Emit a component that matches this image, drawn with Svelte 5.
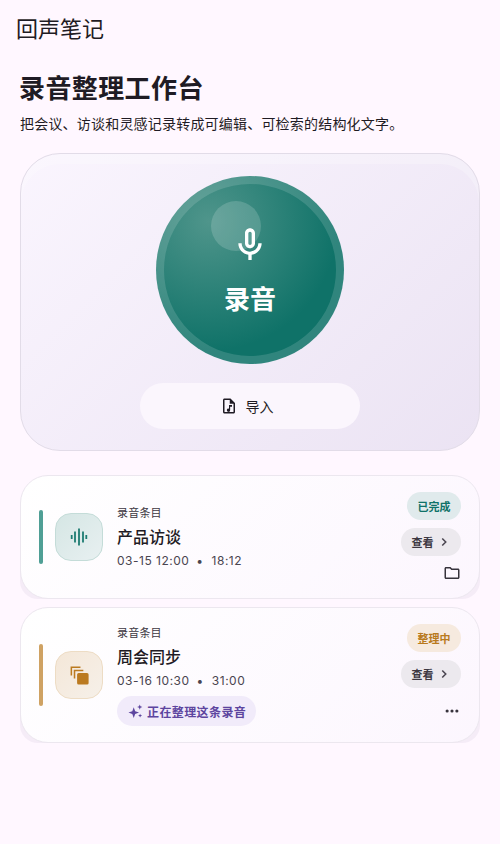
<script lang="ts">
  interface Recording {
    name: string;
    time: string;
    length: string;
    status: string;
    kind: "done" | "busy";
    note?: string;
  }

  const recordings: Recording[] = [
    { name: "产品访谈", time: "03-15 12:00", length: "18:12", status: "已完成", kind: "done" },
    { name: "周会同步", time: "03-16 10:30", length: "31:00", status: "整理中", kind: "busy", note: "正在整理这条录音" },
  ];
</script>

<div class="page">
  <header class="topbar">回声笔记</header>

  <section class="intro">
    <h1>录音整理工作台</h1>
    <p>把会议、访谈和灵感记录转成可编辑、可检索的结构化文字。</p>
  </section>

  <section class="hero">
    <button class="record">
      <span class="gloss"></span>
      <svg class="mic" viewBox="0 0 24 24" width="40" height="40" aria-hidden="true">
        <path fill="#fff" d="M12 14c1.66 0 3-1.34 3-3V5c0-1.66-1.34-3-3-3S9 3.34 9 5v6c0 1.66 1.34 3 3 3zm-1-9c0-.55.45-1 1-1s1 .45 1 1v6c0 .55-.45 1-1 1s-1-.45-1-1V5z" />
        <path fill="#fff" d="M17 11c0 2.76-2.24 5-5 5s-5-2.24-5-5H5c0 3.53 2.61 6.43 6 6.92V21h2v-3.08c3.39-.49 6-3.39 6-6.92h-2z" />
      </svg>
      <span class="record-label">录音</span>
    </button>
    <button class="import">
      <svg viewBox="0 0 24 24" width="18" height="18" aria-hidden="true">
        <path fill="#1f1b24" d="M14 2H6c-1.1 0-2 .9-2 2v16c0 1.1.9 2 2 2h12c1.1 0 2-.9 2-2V8l-6-6zM6 20V4h7v5h5v11H6z" />
        <path fill="#1f1b24" d="M12 10.5v5.05a2.2 2.2 0 1 0 1.5 2.08V13h2.5v-2.5h-4z" />
      </svg>
      <span>导入</span>
    </button>
  </section>

  <section class="list">
    {#each recordings as item}
      <article class="card {item.kind}">
        <span class="accent"></span>
        <span class="thumb">
          {#if item.kind === "done"}
            <svg viewBox="0 0 24 24" width="24" height="24" aria-hidden="true">
              <path fill="none" stroke="#1d7c72" stroke-width="1.8" d="M12 3.500v17M8 6.500v11M16 6.500v11M4.700 10v4M19.300 10v4" />
            </svg>
          {:else}
            <svg viewBox="0 0 24 24" width="23" height="23" aria-hidden="true">
              <path fill="none" stroke="#bb7a20" stroke-width="1.6" d="M3.500 12V3.500H13M6.800 15V6.800H16" />
              <rect x="9.500" y="9.500" width="12" height="12" rx="1.600" fill="#bb7a20" />
            </svg>
          {/if}
        </span>
        <div class="body">
          <span class="eyebrow">录音条目</span>
          <h2>{item.name}</h2>
          <span class="meta">{item.time}<i>•</i>{item.length}</span>
          {#if item.note}
            <span class="note">
              <svg viewBox="0 0 24 24" width="17" height="17" aria-hidden="true">
                <path fill="#5d459f" d="M9.500 6l2 5.500 5.500 2-5.500 2-2 5.500-2-5.500-5.500-2 5.500-2zM18 2l1 2.700 2.700 1-2.700 1-1 2.700-1-2.700-2.700-1 2.700-1zM18.500 15l.8 2 2 .8-2 .8-.8 2-.8-2-2-.8 2-.8z" />
              </svg>
              {item.note}
            </span>
          {/if}
        </div>
        <div class="side">
          <span class="badge">{item.status}</span>
          <button class="view">
            查看
            <svg viewBox="0 0 24 24" width="14" height="14" aria-hidden="true">
              <path fill="none" stroke="#4a4550" stroke-width="2.600" d="M9 6l6 6-6 6" />
            </svg>
          </button>
          {#if item.kind === "done"}
            <svg class="tail" viewBox="0 0 24 24" width="18" height="18" aria-hidden="true">
              <path fill="#37333c" d="M20 6h-8l-2-2H4c-1.100 0-2 .9-2 2v12c0 1.100.9 2 2 2h16c1.100 0 2-.9 2-2V8c0-1.100-.9-2-2-2zm0 12H4V6h5.170l2 2H20v10z" />
            </svg>
          {:else}
            <svg class="tail dots" viewBox="0 0 24 24" width="18" height="18" aria-hidden="true">
              <circle cx="5.500" cy="12" r="2.100" fill="#37333c" />
              <circle cx="12" cy="12" r="2.100" fill="#37333c" />
              <circle cx="18.500" cy="12" r="2.100" fill="#37333c" />
            </svg>
          {/if}
        </div>
      </article>
    {/each}
  </section>
</div>

<style>
  :global(body) {
    margin: 0;
    background: #fff7ff;
  }

  .page {
    min-height: 844px;
    box-sizing: border-box;
    background: #fff7ff;
    color: #1f1b24;
    font-family: "Noto Sans CJK SC", "Noto Sans", sans-serif;
  }

  button {
    border: none;
    font-family: inherit;
    cursor: pointer;
    padding: 0;
  }

  .topbar {
    height: 54px;
    padding-left: 16px;
    display: flex;
    align-items: center;
    font-size: 22px;
    line-height: 28px;
  }

  .intro {
    padding: 13px 20px 0;
  }

  h1 {
    margin: 0 0 0 -1px;
    font-size: 26px;
    line-height: 40px;
    font-weight: 700;
    letter-spacing: 0.4px;
  }

  .intro p {
    margin: 6px 0 0;
    font-size: 14px;
    line-height: 20px;
    letter-spacing: 0.2px;
  }

  .hero {
    margin: 20px 20px 0;
    height: 298px;
    box-sizing: border-box;
    border: 1px solid #e2dce8;
    border-radius: 40px;
    background: linear-gradient(135deg, #faf5fe, #ebe3f3);
    box-shadow: inset 0 10px 0 rgba(255, 255, 255, 0.24);
    padding-top: 22px;
    display: flex;
    flex-direction: column;
    align-items: center;
  }

  .record {
    position: relative;
    width: 188px;
    height: 188px;
    flex: none;
    border-radius: 50%;
    border: 8px solid rgba(255, 255, 255, 0.14);
    box-sizing: border-box;
    background: radial-gradient(circle at 28% 24%, #4f958b, #0f7268 66%) border-box;
    color: #fff;
    display: flex;
    flex-direction: column;
    align-items: center;
    overflow: hidden;
  }

  .gloss {
    position: absolute;
    left: 47px;
    top: 17px;
    width: 50px;
    height: 50px;
    border-radius: 50%;
    background: rgba(255, 255, 255, 0.16);
  }

  .mic {
    position: relative;
    margin-top: 41px;
  }

  .record-label {
    margin-top: 16px;
    font-size: 26px;
    line-height: 34px;
    font-weight: 700;
  }

  .import {
    margin-top: 19px;
    width: 220px;
    height: 46px;
    flex: none;
    box-sizing: border-box;
    padding-right: 7px;
    border-radius: 23px;
    background: #fbf6fd;
    color: #1f1b24;
    font-size: 14px;
    display: flex;
    align-items: center;
    justify-content: center;
    gap: 8px;
  }

  .list {
    margin: 24px 20px 0;
    display: flex;
    flex-direction: column;
    gap: 8px;
    isolation: isolate;
  }

  .card {
    position: relative;
    box-sizing: border-box;
    border: 1px solid #ece7ef;
    border-radius: 28px;
    background: linear-gradient(135deg, #ffffff, #fcf6fe);
    padding: 0 18px;
    display: flex;
    align-items: center;
    height: 124px;
  }

  .card::before {
    content: "";
    position: absolute;
    left: -1px;
    right: -1px;
    bottom: -1px;
    height: 40px;
    border-radius: 0 0 18px 18px;
    background: rgba(60, 40, 90, 0.05);
    z-index: -1;
  }

  .card.busy {
    height: 136px;
  }

  .accent {
    width: 4px;
    height: 54px;
    border-radius: 2px;
    background: #4f9f95;
    flex: none;
  }

  .busy .accent {
    height: 62px;
    background: #cfa263;
  }

  .thumb {
    width: 48px;
    height: 48px;
    margin-left: 12px;
    flex: none;
    box-sizing: border-box;
    border-radius: 16px;
    border: 1px solid #c4dcd8;
    background: linear-gradient(135deg, #d5e6e4, #e8f0f1);
    display: flex;
    align-items: center;
    justify-content: center;
  }

  .busy .thumb {
    border-color: #eddcc4;
    background: linear-gradient(135deg, #f4e7d8, #f6f0e9);
  }

  .body {
    margin-left: 14px;
    flex: 1;
    display: flex;
    flex-direction: column;
    align-items: flex-start;
  }

  .eyebrow {
    font-size: 11px;
    line-height: 16px;
    letter-spacing: 0.2px;
    color: #3d3842;
  }

  h2 {
    margin: 4px 0 0;
    font-size: 16px;
    line-height: 24px;
    font-weight: 500;
  }

  .meta {
    margin-top: 4px;
    font-family: Inter, "Noto Sans", sans-serif;
    font-size: 12px;
    line-height: 18px;
    letter-spacing: 0.5px;
    color: #4a4550;
  }

  .meta i {
    font-style: normal;
    margin: 0 8px 0 7px;
  }

  .note {
    margin-top: 6px;
    height: 30px;
    padding: 0 10px;
    border-radius: 15px;
    background: #f1ebfa;
    color: #5d459f;
    font-size: 12px;
    font-weight: 700;
    letter-spacing: 0.4px;
    display: flex;
    align-items: center;
    gap: 3px;
  }

  .side {
    align-self: stretch;
    display: flex;
    flex-direction: column;
    align-items: flex-end;
    padding-top: 16px;
  }

  .badge {
    width: 54px;
    height: 28px;
    border-radius: 14px;
    background: #e0eaec;
    color: #0f7268;
    font-size: 11px;
    font-weight: 700;
    display: flex;
    align-items: center;
    justify-content: center;
  }

  .busy .badge {
    background: #f6eadf;
    color: #b97a1e;
  }

  .view {
    margin-top: 8px;
    width: 60px;
    height: 28px;
    border-radius: 14px;
    background: #ece9ee;
    color: #3d3842;
    font-size: 11px;
    font-weight: 700;
    display: flex;
    align-items: center;
    justify-content: center;
    gap: 3px;
  }

  .tail {
    margin-top: 8px;
  }

  .tail.dots {
    margin-top: 14px;
  }
</style>
